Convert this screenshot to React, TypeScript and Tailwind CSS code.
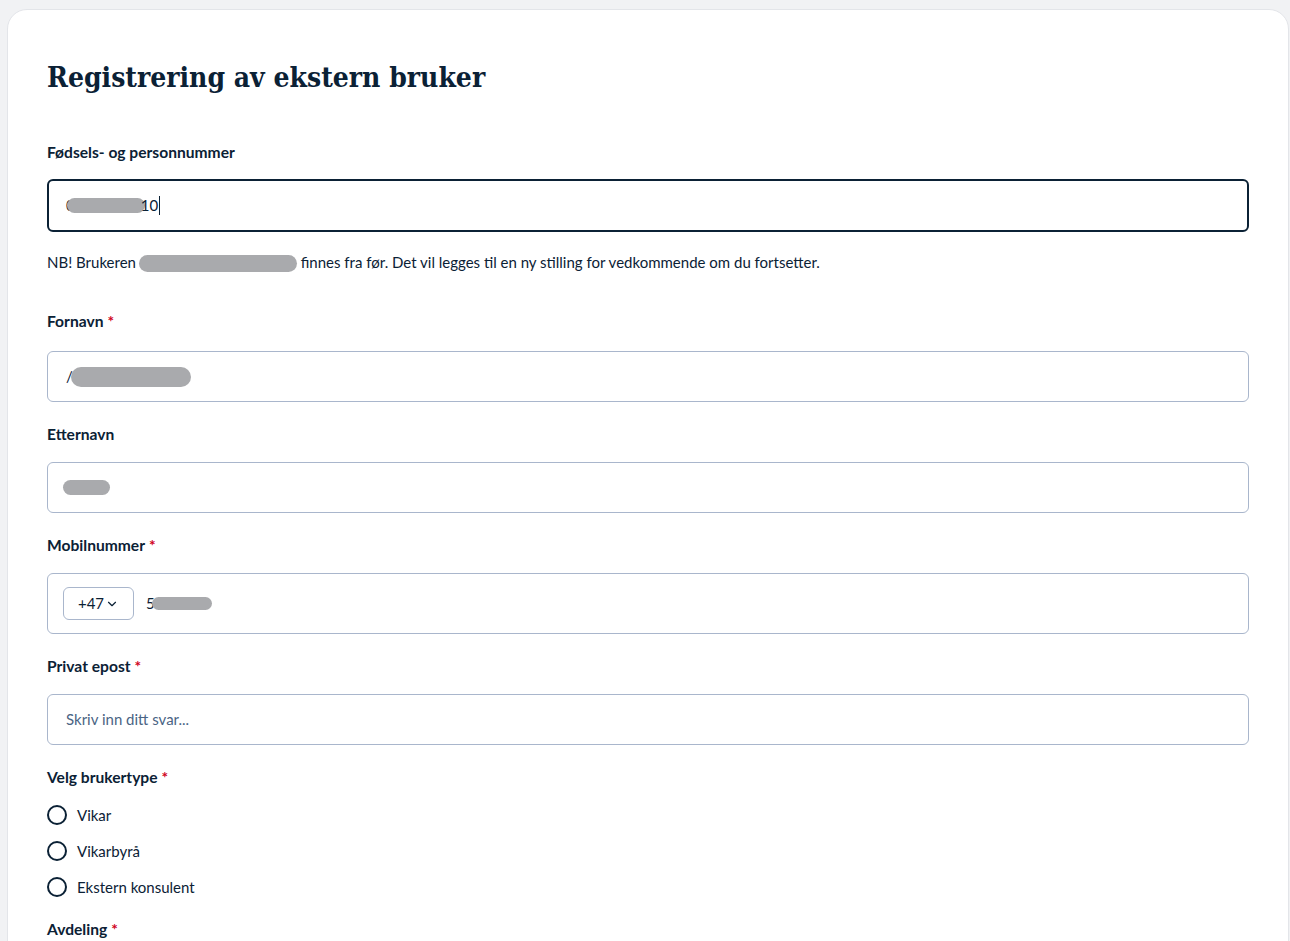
import { ChevronDown } from "lucide-react";

const Blob = ({ className }: { className: string }) => (
  <span className={`inline-block rounded-full bg-[#a9aaad] align-middle ${className}`} />
);

const Label = ({ text, required }: { text: string; required?: boolean }) => (
  <div className="h-6 leading-6 text-[15.6px] font-bold text-[#0b2135]">
    {text}
    {required && <span className="ml-1 text-[#d0021b]">*</span>}
  </div>
);

const Field = ({
  children,
  className = "",
  narrow,
}: {
  children: React.ReactNode;
  className?: string;
  narrow?: boolean;
}) => (
  <div
    className={`flex items-center rounded-md border border-[#a9b6cc] bg-white text-[15px] text-[#0b2135] ${
      narrow ? "px-[15px]" : "px-[18px]"
    } ${className}`}
  >
    {children}
  </div>
);

const Radio = ({ label }: { label: string }) => (
  <label className="flex h-9 items-center gap-[10px]">
    <span className="h-5 w-5 rounded-full border-2 border-[#0b2135] bg-white" />
    <span className="text-[15px] text-[#0b2135]">{label}</span>
  </label>
);

export default function App() {
  return (
    <div className="min-h-[941px] bg-[#f1f2f4] pl-[7px] pr-px pt-[9px] font-['Lato','Noto_Sans',sans-serif]">
      <div className="min-h-[960px] rounded-[20px] border border-[#e3e5e9] bg-white px-[39px] pt-[50px]">
        <h1 className="h-9 font-['DejaVu_Serif_Condensed','DejaVu_Serif',serif] text-[28px] font-bold leading-9 text-[#0b2135]">
          Registrering av ekstern bruker
        </h1>

        <div className="mt-[44px]">
          <Label text="Fødsels- og personnummer" />
          <div className="mt-[15px] flex h-[53px] items-center rounded-md border-2 border-[#0b2135] px-[17px] text-[15px] text-[#0b2135]">
            <span>0</span>
            <Blob className="-ml-[8px] h-[15px] w-[78px]" />
            <span className="-ml-[4px]">10</span>
            <span className="ml-px h-[19px] w-px bg-[#0b2135]" />
          </div>
          <p className="mt-[20px] h-5 leading-5 text-[15px] text-[#0b2135]">
            NB! Brukeren
            <Blob className="-mt-[2px] ml-[3px] h-[17px] w-[158px]" />
            {" "}finnes fra før. Det vil legges til en ny stilling for vedkommende om du fortsetter.
          </p>
        </div>

        <div className="mt-[37px]">
          <Label text="Fornavn" required />
          <Field className="mt-[18px] h-[51px]">
            <span>/</span>
            <Blob className="-ml-[2px] h-[20px] w-[120px]" />
          </Field>
        </div>

        <div className="mt-[20px]">
          <Label text="Etternavn" />
          <Field narrow className="mt-[16px] h-[51px]">
            <Blob className="h-[15px] w-[47px]" />
          </Field>
        </div>

        <div className="mt-[20px]">
          <Label text="Mobilnummer" required />
          <Field narrow className="mt-[16px] h-[61px] gap-[12px]">
            <div className="flex h-[33px] w-[71px] items-center justify-center gap-[1px] rounded-md border border-[#a9b6cc] text-[15px]">
              +47
              <ChevronDown className="h-[14px] w-[14px]" strokeWidth={2} />
            </div>
            <span className="flex items-center">
              <span>5</span>
              <Blob className="-ml-[3px] h-[13px] w-[60px]" />
            </span>
          </Field>
        </div>

        <div className="mt-[20px]">
          <Label text="Privat epost" required />
          <Field className="mt-[16px] h-[51px]">
            <span className="text-[#4a6484]">Skriv inn ditt svar...</span>
          </Field>
        </div>

        <div className="mt-[20px]">
          <Label text="Velg brukertype" required />
          <div className="mt-[8px] flex flex-col">
            <Radio label="Vikar" />
            <Radio label="Vikarbyrå" />
            <Radio label="Ekstern konsulent" />
          </div>
        </div>

        <div className="mt-[12px]">
          <Label text="Avdeling" required />
        </div>
      </div>
    </div>
  );
}
